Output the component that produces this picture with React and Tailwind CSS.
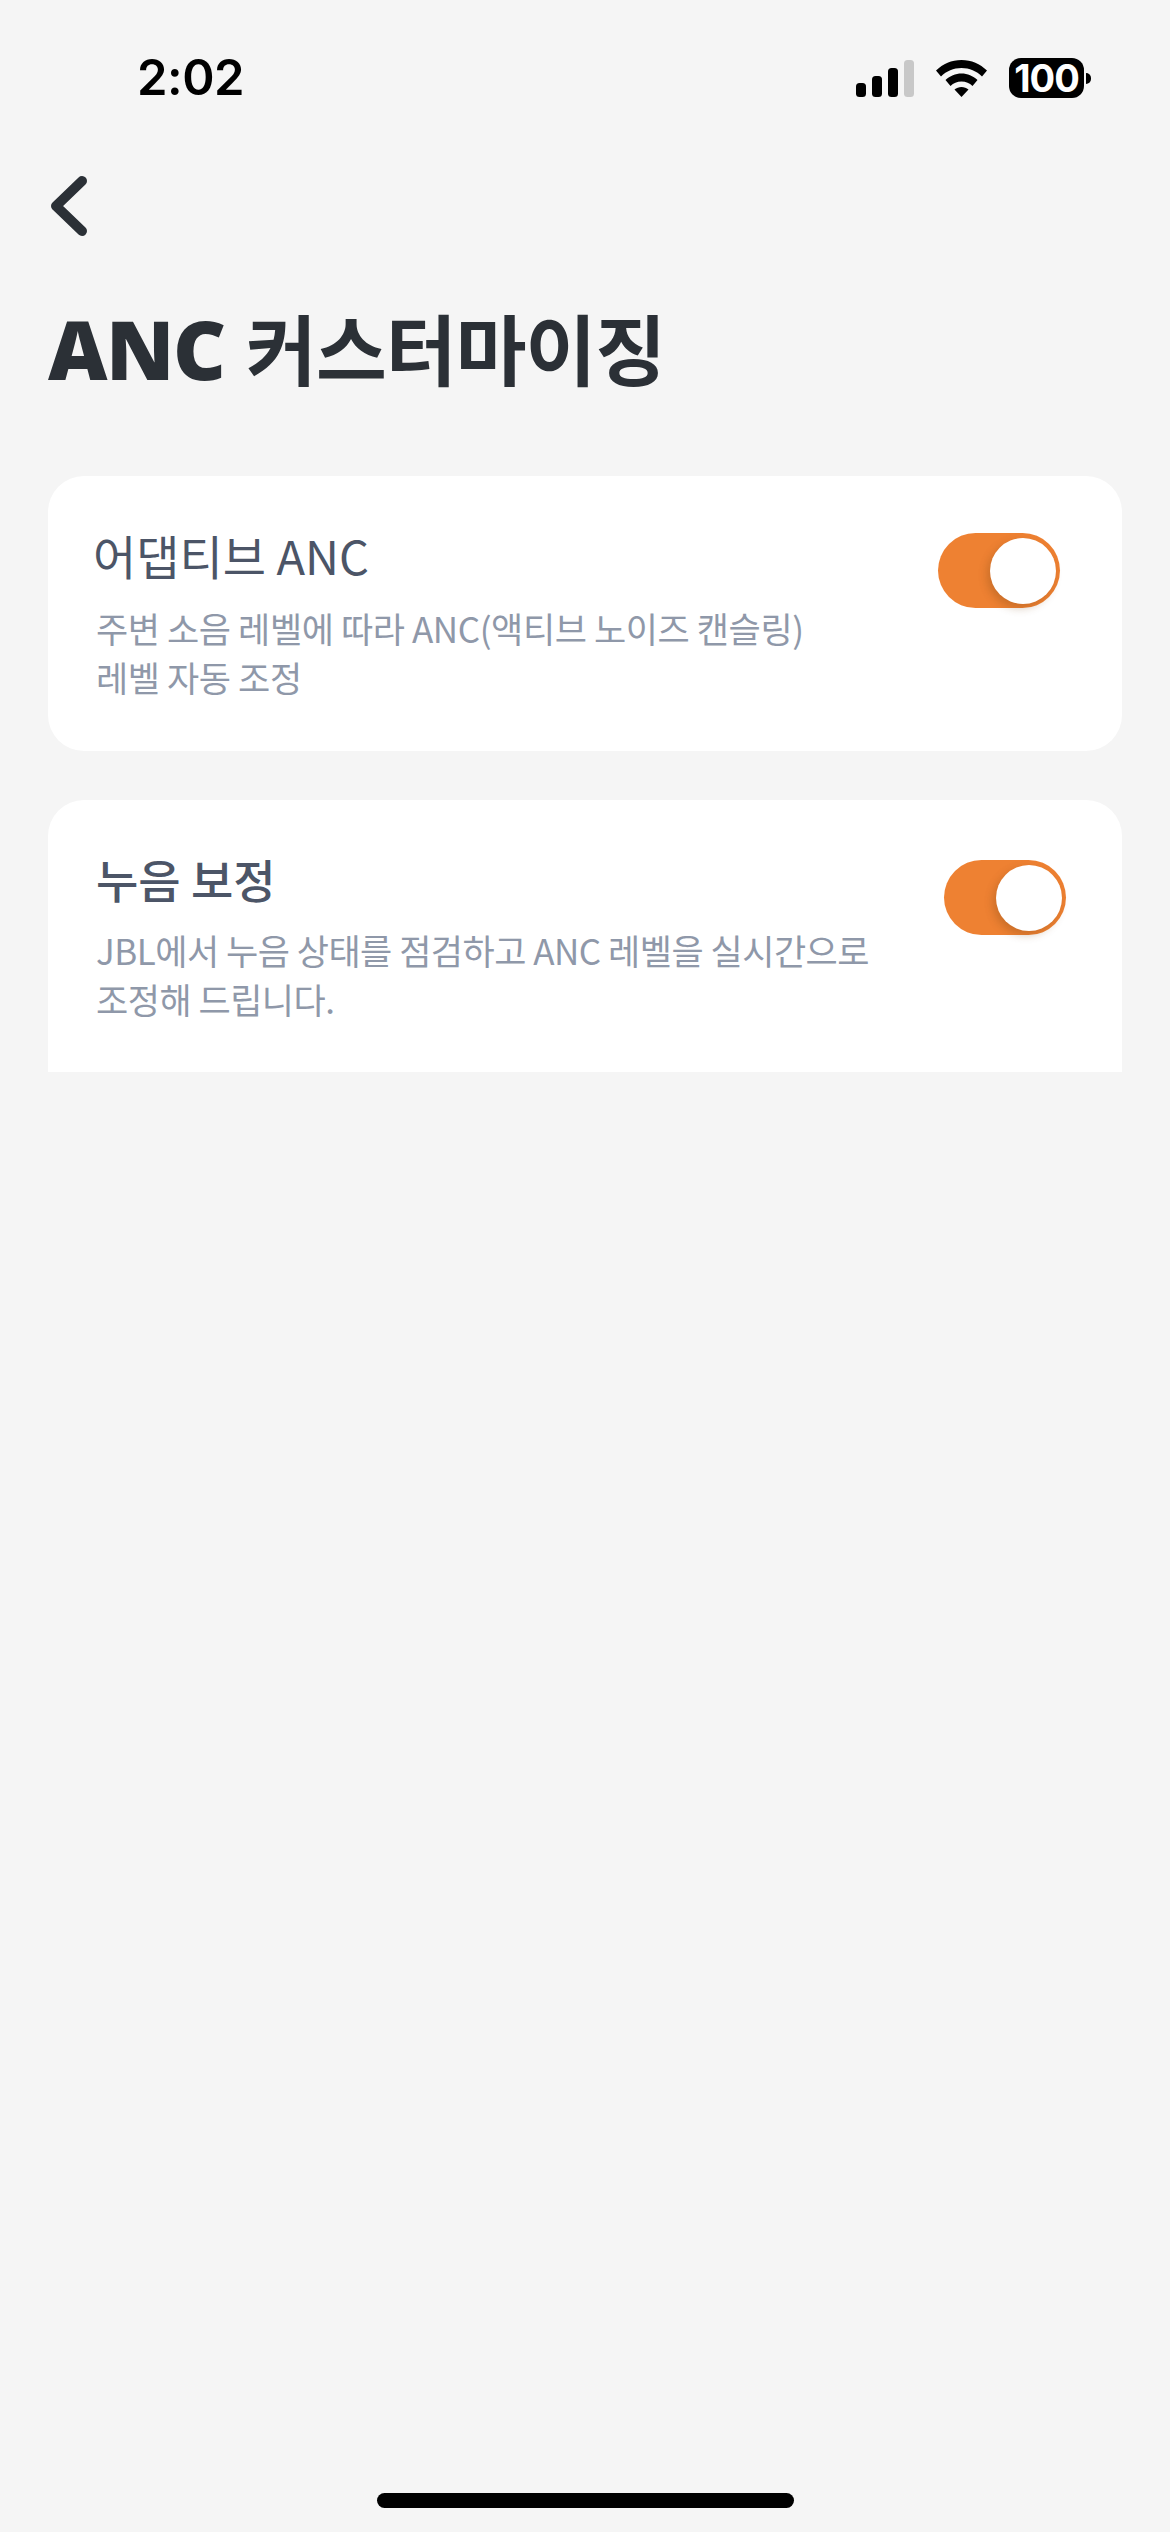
const kr = "font-['Noto_Sans_CJK_KR','Noto_Sans',sans-serif]";

function Signal() {
  return (
    <svg width="58" height="37" viewBox="0 0 58 37" className="block">
      <rect x="0" y="23" width="10" height="14" rx="3.5" fill="#000" />
      <rect x="16" y="16" width="10" height="21" rx="3.5" fill="#000" />
      <rect x="32" y="8" width="10" height="29" rx="3.5" fill="#000" />
      <rect x="48" y="0" width="10" height="37" rx="3.5" fill="#c8c8c8" />
    </svg>
  );
}

function Wifi() {
  return (
    <svg width="51" height="37" viewBox="0 0 51 37" className="block">
      <path d="M25.5 0C15.5 0 7 4 0 10.5L5 16.5C10.5 11 17.5 8 25.5 8C33.5 8 40.5 11 46 16.5L51 10.5C44 4 35.5 0 25.5 0Z" fill="#000" />
      <path d="M25.5 13.5C19.5 13.5 14 16 9.500 20L14.500 26C17.500 23 21 21.500 25.500 21.500C30 21.500 33.500 23 36.500 26L41.500 20C37 16 31.500 13.500 25.500 13.500Z" fill="#000" />
      <path d="M25.500 27C22.800 27 20.500 28 18.500 29.500L25.500 37L32.500 29.500C30.500 28 28.200 27 25.500 27Z" fill="#000" />
    </svg>
  );
}

function Battery() {
  return (
    <div className="flex items-center gap-[2px]">
      <div className="w-[75px] h-[40px] rounded-[12px] bg-black flex items-center justify-center text-white text-[38px] leading-none font-bold font-['Inter',sans-serif] tracking-[-1px]">
        100
      </div>
      <div className="w-[5px] h-[11px] bg-black rounded-r-full" />
    </div>
  );
}

function Toggle({ className }) {
  return (
    <div className={"w-[122px] h-[75px] rounded-full bg-[#ee8132] flex items-center justify-end pr-[4px] shrink-0 " + className}>
      <div className="w-[66px] h-[66px] rounded-full bg-white shadow-[-3px_4px_8px_rgba(120,70,20,0.3)]" />
    </div>
  );
}

export default function App() {
  return (
    <div className={"w-[1170px] h-[2532px] bg-[#f5f5f5] flex flex-col " + kr}>
      <div className="h-[118px] pt-[58px] pl-[137px] pr-[79px] flex items-start justify-between">
        <div className="text-[49px] leading-[40px] font-semibold text-black font-['Inter',sans-serif] tracking-[-0.5px]">2:02</div>
        <div className="flex items-center">
          <Signal />
          <div className="ml-[22px]"><Wifi /></div>
          <div className="ml-[22px]"><Battery /></div>
        </div>
      </div>

      <div className="pl-[48px] pt-[55px]">
        <svg width="42" height="64" viewBox="0 0 42 64" className="block" fill="none">
          <path d="M34 8L8 33L34 58" stroke="#2b3036" strokeWidth="10" strokeLinecap="round" strokeLinejoin="round" />
        </svg>
      </div>

      <h1 className="pl-[48px] mt-[55px] text-[77px] leading-[110px] text-[#2b3036] font-semibold tracking-[-1px] whitespace-nowrap">
        <span className="font-black font-['Open_Sans',sans-serif] text-[82px] tracking-[-1.5px] mr-[5px]">ANC</span> 커스터마이징
      </h1>

      <div className="mx-[48px] mt-[73px] h-[275px] bg-white rounded-[36px] flex items-start justify-between pl-[45px] pr-[62px]">
        <div className="pt-[49px]">
          <div className="text-[47px] leading-[60px] text-[#4c5567]">어댑티브 ANC</div>
          <div className="pl-[3px] mt-[18px] text-[35px] leading-[49px] text-[#8f98a9] tracking-[-0.4px] whitespace-nowrap">
            주변 소음 레벨에 따라 ANC(액티브 노이즈 캔슬링)
            <br />
            레벨 자동 조정
          </div>
        </div>
        <Toggle className="mt-[57px]" />
      </div>

      <div className="mx-[48px] mt-[49px] h-[272px] bg-white rounded-t-[36px] flex items-start justify-between pl-[48px] pr-[56px]">
        <div className="pt-[48px]">
          <div className="text-[46px] leading-[60px] text-[#4c5567] font-medium">누음 보정</div>
          <div className="mt-[17px] text-[35px] leading-[49px] text-[#8f98a9] tracking-[-0.5px] whitespace-nowrap">
            JBL에서 누음 상태를 점검하고 ANC 레벨을 실시간으로
            <br />
            조정해 드립니다.
          </div>
        </div>
        <Toggle className="mt-[60px]" />
      </div>

      <div className="flex-1 flex items-end justify-center pb-[24px]">
        <div className="w-[417px] h-[15px] rounded-full bg-black" />
      </div>
    </div>
  );
}
